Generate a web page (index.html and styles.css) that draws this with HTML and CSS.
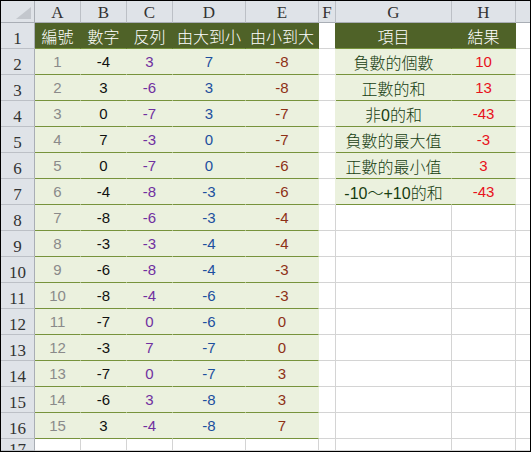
FILE: index.html
```html
<!DOCTYPE html>
<html lang="zh-Hant">
<head>
<meta charset="utf-8">
<title>Sheet</title>
<link rel="stylesheet" href="styles.css">
</head>
<body>
<div class="frame">
<div class="sheet">
  <!-- column headers -->
  <div class="corner"><div class="tri"></div></div>
  <div class="col">A</div><div class="col">B</div><div class="col">C</div><div class="col">D</div><div class="col">E</div><div class="col">F</div><div class="col">G</div><div class="col">H</div><div class="col last"></div>

  <!-- row 1 -->
  <div class="rh">1</div>
  <div class="hd">編號</div><div class="hd">數字</div><div class="hd">反列</div><div class="hd">由大到小</div><div class="hd">由小到大</div>
  <div class="c fh"></div><div class="hd">項目</div><div class="hd">結果</div><div class="c last"></div>

  <!-- row 2 -->
  <div class="rh">2</div>
  <div class="dt ca">1</div><div class="dt cb">-4</div><div class="dt cc">3</div><div class="dt cd">7</div><div class="dt ce">-8</div>
  <div class="c fd"></div><div class="dt cg">負數的個數</div><div class="dt cr">10</div><div class="c last"></div>

  <!-- row 3 -->
  <div class="rh">3</div>
  <div class="dt ca">2</div><div class="dt cb">3</div><div class="dt cc">-6</div><div class="dt cd">3</div><div class="dt ce">-8</div>
  <div class="c fd"></div><div class="dt cg">正數的和</div><div class="dt cr">13</div><div class="c last"></div>

  <!-- row 4 -->
  <div class="rh">4</div>
  <div class="dt ca">3</div><div class="dt cb">0</div><div class="dt cc">-7</div><div class="dt cd">3</div><div class="dt ce">-7</div>
  <div class="c fd"></div><div class="dt cg">非0的和</div><div class="dt cr">-43</div><div class="c last"></div>

  <!-- row 5 -->
  <div class="rh">5</div>
  <div class="dt ca">4</div><div class="dt cb">7</div><div class="dt cc">-3</div><div class="dt cd">0</div><div class="dt ce">-7</div>
  <div class="c fd"></div><div class="dt cg">負數的最大值</div><div class="dt cr">-3</div><div class="c last"></div>

  <!-- row 6 -->
  <div class="rh">6</div>
  <div class="dt ca">5</div><div class="dt cb">0</div><div class="dt cc">-7</div><div class="dt cd">0</div><div class="dt ce">-6</div>
  <div class="c fd"></div><div class="dt cg">正數的最小值</div><div class="dt cr">3</div><div class="c last"></div>

  <!-- row 7 -->
  <div class="rh">7</div>
  <div class="dt ca">6</div><div class="dt cb">-4</div><div class="dt cc">-8</div><div class="dt cd">-3</div><div class="dt ce">-6</div>
  <div class="c fd"></div><div class="dt cg">-10～+10的和</div><div class="dt cr">-43</div><div class="c last"></div>

  <!-- row 8 -->
  <div class="rh">8</div>
  <div class="dt ca">7</div><div class="dt cb">-8</div><div class="dt cc">-6</div><div class="dt cd">-3</div><div class="dt ce">-4</div>
  <div class="c"></div><div class="c"></div><div class="c"></div><div class="c last"></div>

  <!-- row 9 -->
  <div class="rh">9</div>
  <div class="dt ca">8</div><div class="dt cb">-3</div><div class="dt cc">-3</div><div class="dt cd">-4</div><div class="dt ce">-4</div>
  <div class="c"></div><div class="c"></div><div class="c"></div><div class="c last"></div>

  <!-- row 10 -->
  <div class="rh">10</div>
  <div class="dt ca">9</div><div class="dt cb">-6</div><div class="dt cc">-8</div><div class="dt cd">-4</div><div class="dt ce">-3</div>
  <div class="c"></div><div class="c"></div><div class="c"></div><div class="c last"></div>

  <!-- row 11 -->
  <div class="rh">11</div>
  <div class="dt ca">10</div><div class="dt cb">-8</div><div class="dt cc">-4</div><div class="dt cd">-6</div><div class="dt ce">-3</div>
  <div class="c"></div><div class="c"></div><div class="c"></div><div class="c last"></div>

  <!-- row 12 -->
  <div class="rh">12</div>
  <div class="dt ca">11</div><div class="dt cb">-7</div><div class="dt cc">0</div><div class="dt cd">-6</div><div class="dt ce">0</div>
  <div class="c"></div><div class="c"></div><div class="c"></div><div class="c last"></div>

  <!-- row 13 -->
  <div class="rh">13</div>
  <div class="dt ca">12</div><div class="dt cb">-3</div><div class="dt cc">7</div><div class="dt cd">-7</div><div class="dt ce">0</div>
  <div class="c"></div><div class="c"></div><div class="c"></div><div class="c last"></div>

  <!-- row 14 -->
  <div class="rh">14</div>
  <div class="dt ca">13</div><div class="dt cb">-7</div><div class="dt cc">0</div><div class="dt cd">-7</div><div class="dt ce">3</div>
  <div class="c"></div><div class="c"></div><div class="c"></div><div class="c last"></div>

  <!-- row 15 -->
  <div class="rh">15</div>
  <div class="dt ca">14</div><div class="dt cb">-6</div><div class="dt cc">3</div><div class="dt cd">-8</div><div class="dt ce">3</div>
  <div class="c"></div><div class="c"></div><div class="c"></div><div class="c last"></div>

  <!-- row 16 -->
  <div class="rh">16</div>
  <div class="dt ca">15</div><div class="dt cb">3</div><div class="dt cc">-4</div><div class="dt cd">-8</div><div class="dt ce">7</div>
  <div class="c"></div><div class="c"></div><div class="c"></div><div class="c last"></div>

  <!-- row 17 (partially visible) -->
  <div class="rh cut"><span>17</span></div>
  <div class="c"></div><div class="c"></div><div class="c"></div><div class="c"></div><div class="c"></div>
  <div class="c"></div><div class="c"></div><div class="c"></div><div class="c last"></div>
</div>
</div>
</body>
</html>
```

FILE: styles.css
```css
* { box-sizing: border-box; }

html, body {
  margin: 0;
  padding: 0;
  background: #ffffff;
}

.frame {
  width: 531px;
  height: 452px;
  border: 1px solid #000000;
  overflow: hidden;
}

.sheet {
  display: grid;
  grid-template-columns: 34px 46px 46px 46px 73px 73px 17px 116px 64px 14px;
  grid-template-rows: 22px repeat(16, 26px) 12px;
  width: 529px;
  height: 450px;
  overflow: hidden;
}

.sheet > div {
  display: flex;
  align-items: center;
  justify-content: center;
  border-right: 1px solid #d4d4d4;
  border-bottom: 1px solid #d4d4d4;
  white-space: nowrap;
  overflow: hidden;
}

.sheet > div.last { border-right: none; }

/* headers */
.corner, .col, .rh {
  background: #dfe3e8;
  color: #333333;
  font-family: "Liberation Serif", "DejaVu Serif", serif;
  font-size: 17px;
  line-height: 17px;
}

.sheet > .corner {
  border-right: 1px solid #a9aeb5;
  border-bottom: 1px solid #a9aeb5;
  justify-content: flex-end;
  align-items: flex-end;
  padding: 0 3px 3px 0;
}

.tri {
  width: 15px;
  height: 12px;
  background: #c3c7cd;
  clip-path: polygon(100% 0, 100% 100%, 0 100%);
}

.sheet > .col {
  border-right: 1px solid #bcc0c6;
  border-bottom: 1px solid #a9aeb5;
  align-items: flex-end;
  padding-bottom: 1px;
}

.sheet > .col.last { border-right: none; }

.sheet > .rh {
  border-right: 1px solid #a9aeb5;
  border-bottom: 1px solid #bcc0c6;
  align-items: flex-end;
  padding-bottom: 1px;
}

.sheet > .rh.cut {
  align-items: flex-start;
  padding: 2px 0 0 0;
}

/* green table header */
.sheet > .hd {
  background: #4f6228;
  color: #ffffff;
  border-right-color: #4f6228;
  border-bottom-color: #77933c;
  font-family: "Noto Sans CJK TC", "Noto Sans CJK SC", sans-serif;
  font-weight: 300;
  font-size: 16px;
}

/* green data cells */
.sheet > .dt {
  background: #ebf1de;
  border-right-color: #ebf1de;
  border-bottom-color: #77933c;
  font-family: "Liberation Sans", Arial, sans-serif;
  font-size: 15px;
}

/* F column cells bordering the G:H table */
.sheet > .fh { border-right-color: #4f6228; }
.sheet > .fd { border-right-color: #ebf1de; }

/* text colours */
.ca { color: #8a8a8a; }
.cb { color: #111111; }
.cc { color: #7030a0; }
.cd { color: #1d4f9e; }
.ce { color: #8e3016; }
.cr { color: #e8121b; }
.sheet > .cg {
  color: #163d10;
  font-family: "Liberation Sans", "Noto Sans CJK TC", sans-serif;
  font-weight: 300;
  font-size: 16px;
}
```
